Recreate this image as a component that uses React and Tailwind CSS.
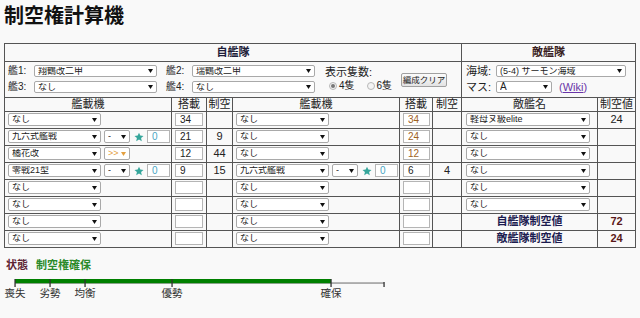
import React from "react";

const ship1 = [
  { name: "なし", slots: "34" },
  { name: "九六式艦戦", prof: "-", star: "0", slots: "21", air: "9" },
  { name: "橘花改", prof: ">>", orange: true, slots: "12", air: "44" },
  { name: "零戦21型", prof: "-", star: "0", slots: "9", air: "15" },
  { name: "なし" },
  { name: "なし" },
  { name: "なし" },
  { name: "なし" },
];

const ship2 = [
  { name: "なし", slots: "34", brown: true },
  { name: "なし", slots: "24", brown: true },
  { name: "なし", slots: "12", brown: true },
  { name: "九六式艦戦", prof: "-", star: "0", slots: "6", air: "4" },
  { name: "なし" },
  { name: "なし" },
  { name: "なし" },
  { name: "なし" },
];

const enemies = [
  { name: "軽母ヌ級elite", air: "24" },
  { name: "なし" },
  { name: "なし" },
  { name: "なし" },
  { name: "なし" },
  { name: "なし" },
];

const cell = "border border-[#555] p-0";

function Arrow({ fill = "#111" }) {
  return (
    <svg width="5" height="4" viewBox="0 0 5 4" className="shrink-0">
      <path d="M0 0h5L2.5 4z" fill={fill} />
    </svg>
  );
}

function Sel({ w, text, color = "text-[#222]", arrow, size = "text-[9px]", h = "h-[13px]" }) {
  return (
    <div
      className={`flex ${h} ${w} items-center justify-between rounded-[2px] border border-[#a9a9a9] bg-white pl-[3px] pr-[3px] ${size} leading-none ${color}`}
    >
      <span className="truncate whitespace-nowrap">{text}</span>
      <Arrow fill={arrow} />
    </div>
  );
}

function Box({ w, text, color = "text-[#222]" }) {
  return (
    <div
      className={`flex h-[13px] ${w} items-center border border-[#b5b5b5] bg-white pl-[4px] text-[10px] leading-none ${color}`}
    >
      {text}
    </div>
  );
}

function Star() {
  return (
    <svg width="10" height="10" viewBox="0 0 24 24" className="ml-[4px] shrink-0">
      <path
        d="M12 1.5l3.1 7.1 7.7.7-5.8 5.1 1.7 7.6L12 18l-6.7 4 1.7-7.6-5.8-5.1 7.7-.7z"
        fill="#35a69b"
      />
    </svg>
  );
}

function PlaneCells({ p, boxW }) {
  return (
    <>
      <td className={`${cell} pl-[3px]`}>
        <div className="flex items-center">
          <Sel w="w-[93px]" text={p.name} />
          {p.prof && (
            <div className="ml-[3px]">
              <Sel
                w="w-[26px]"
                text={p.prof}
                color={p.orange ? "text-[#e3a040]" : "text-[#222]"}
                arrow={p.orange ? "#e3a040" : "#111"}
              />
            </div>
          )}
          {p.star && (
            <>
              <Star />
              <div className="ml-[3px]">
                <Box w="w-[23px]" text={p.star} color="text-[#4aa6c4]" />
              </div>
            </>
          )}
        </div>
      </td>
      <td className={`${cell} pl-[3px]`}>
        <Box w={boxW} text={p.slots} color={p.brown ? "text-[#a0621e]" : "text-[#222]"} />
      </td>
      <td className={`${cell} text-center text-[11px] text-[#222]`}>{p.air}</td>
    </>
  );
}

function Radio({ on }) {
  return (
    <span className="flex h-[8px] w-[8px] items-center justify-center rounded-full border border-[#b8b8b8] bg-[#f4f4f4]">
      {on && <span className="h-[4px] w-[4px] rounded-full bg-[#777]" />}
    </span>
  );
}

const ticks = [
  { x: 15, label: "喪失" },
  { x: 50, label: "劣勢" },
  { x: 85, label: "均衡" },
  { x: 172, label: "優勢" },
  { x: 331, label: "確保" },
];

export default function App() {
  return (
    <div className="min-h-screen bg-[#f9f9f9] font-['Liberation_Sans','Noto_Sans_CJK_JP',sans-serif] text-[#222]">
      <h1 className="pl-[4px] pt-[5px] text-[20px] font-bold leading-[22px] text-[#111]">
        制空権計算機
      </h1>

      <table className="ml-[4px] mt-[16px] w-[631px] table-fixed border-collapse">
        <colgroup>
          <col className="w-[167px]" />
          <col className="w-[35px]" />
          <col className="w-[26px]" />
          <col className="w-[167px]" />
          <col className="w-[33px]" />
          <col className="w-[29px]" />
          <col className="w-[136px]" />
          <col className="w-[38px]" />
        </colgroup>
        <tbody>
          <tr className="h-[17px]">
            <th colSpan={6} className={`${cell} text-[11px] font-bold text-[#1e1e3a]`}>
              自艦隊
            </th>
            <th colSpan={2} className={`${cell} text-[11px] font-bold text-[#3a1e1e]`}>
              敵艦隊
            </th>
          </tr>
          <tr className="h-[36px]">
            <td colSpan={6} className={`${cell} pl-[3px]`}>
              <div className="flex items-center">
                <div className="flex flex-col gap-[4px] text-[10px] leading-none">
                  <div className="flex items-center">
                    <span className="w-[26px]">艦1:</span>
                    <Sel w="w-[123px]" text="翔鶴改二甲" h="h-[12px]" />
                    <span className="ml-[9px] w-[26px]">艦2:</span>
                    <Sel w="w-[123px]" text="瑞鶴改二甲" h="h-[12px]" />
                  </div>
                  <div className="flex items-center">
                    <span className="w-[26px]">艦3:</span>
                    <Sel w="w-[123px]" text="なし" h="h-[12px]" />
                    <span className="ml-[9px] w-[26px]">艦4:</span>
                    <Sel w="w-[123px]" text="なし" h="h-[12px]" />
                  </div>
                </div>
                <div className="ml-[10px] flex w-[76px] flex-col gap-[3px] text-[11px] leading-none">
                  <span>表示隻数:</span>
                  <div className="flex items-center pl-[4px] text-[10px]">
                    <Radio on />
                    <span className="ml-[2px]">4隻</span>
                    <span className="ml-[12px]" />
                    <Radio />
                    <span className="ml-[2px]">6隻</span>
                  </div>
                </div>
                <button className="mt-[2px] flex h-[14px] w-[46px] items-center justify-center whitespace-nowrap rounded-[2px] border border-[#a0a0a0] bg-gradient-to-b from-[#fbfbfb] to-[#e3e3e3] px-0 text-[8.5px] leading-none text-[#222]">
                  編成クリア
                </button>
              </div>
            </td>
            <td colSpan={2} className={`${cell} pl-[4px]`}>
              <div className="flex flex-col gap-[4px] text-[11px] leading-none">
                <div className="flex items-center">
                  <span className="w-[30px]">海域:</span>
                  <Sel w="w-[130px]" text="(5-4) サーモン海域" h="h-[12px]" />
                </div>
                <div className="flex items-center">
                  <span className="w-[30px]">マス:</span>
                  <Sel w="w-[56px]" text="A" h="h-[12px]" size="text-[10px]" />
                  <span className="ml-[7px] text-[11px] text-[#6a35a8]">
                    (<span className="underline">Wiki</span>)
                  </span>
                </div>
              </div>
            </td>
          </tr>
          <tr className="h-[14px] text-[11px] font-normal leading-none">
            <th className={`${cell} font-normal`}>艦載機</th>
            <th className={`${cell} font-normal`}>搭載</th>
            <th className={`${cell} font-normal`}>制空</th>
            <th className={`${cell} font-normal`}>艦載機</th>
            <th className={`${cell} font-normal`}>搭載</th>
            <th className={`${cell} font-normal`}>制空</th>
            <th className={`${cell} font-normal`}>敵艦名</th>
            <th className={`${cell} font-normal`}>制空値</th>
          </tr>
          {ship1.map((p, i) => (
            <tr key={i} className="h-[17px] leading-none">
              <PlaneCells p={p} boxW="w-[28px]" />
              <PlaneCells p={ship2[i]} boxW="w-[27px]" />
              {i < 6 ? (
                <>
                  <td className={`${cell} pl-[4px]`}>
                    <Sel w="w-[124px]" text={enemies[i].name} />
                  </td>
                  <td className={`${cell} text-center text-[11px]`}>{enemies[i].air}</td>
                </>
              ) : (
                <>
                  <td className={`${cell} text-center text-[11px] font-bold text-[#1c1c50]`}>
                    {i === 6 ? "自艦隊制空値" : "敵艦隊制空値"}
                  </td>
                  <td className={`${cell} text-center text-[11px] font-bold text-[#5a1818]`}>
                    {i === 6 ? "72" : "24"}
                  </td>
                </>
              )}
            </tr>
          ))}
        </tbody>
      </table>

      <div className="ml-[6px] mt-[11px] flex items-center text-[11px] font-bold leading-[12px]">
        <span className="text-[#5e2434]">状態</span>
        <span className="ml-[8px] text-[#2a8a2a]">制空権確保</span>
      </div>

      <div className="relative mt-[8px] h-[24px] w-[400px]">
        <svg width="400" height="10" className="block">
          <rect x="15" y="3.3" width="369" height="1.5" fill="#9a9a9a" />
          <rect x="15" y="0" width="316" height="4.2" fill="#008000" />
          {ticks.map((t) => (
            <rect key={t.x} x={t.x - 0.6} y="0" width="1.3" height="8" fill="#333" />
          ))}
          <rect x="383.4" y="3" width="1.3" height="5" fill="#333" />
        </svg>
        {ticks.map((t) => (
          <span
            key={t.label}
            className="absolute top-[9px] w-[30px] -translate-x-1/2 text-center text-[10.5px] leading-none text-[#333]"
            style={{ left: t.x }}
          >
            {t.label}
          </span>
        ))}
      </div>
    </div>
  );
}
